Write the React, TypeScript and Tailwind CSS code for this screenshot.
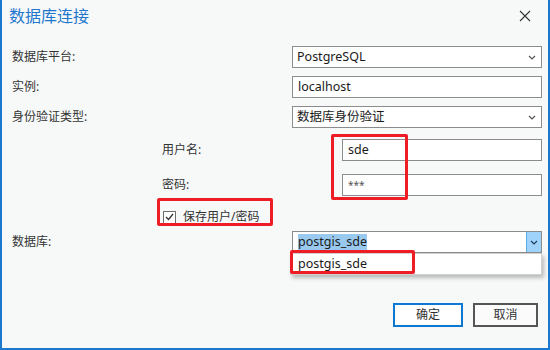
import React from "react";

const font = { fontFamily: '"Noto Sans", "Noto Sans CJK SC", sans-serif' };

const Chevron = ({ color = "#555" }: { color?: string }) => (
  <svg width="8" height="5" viewBox="0 0 8 5" fill="none">
    <path d="M1 1l3 3 3-3" stroke={color} strokeWidth="1.2" />
  </svg>
);

const Select = ({ value }: { value: string }) => (
  <div className="flex h-[22px] flex-1 items-center justify-between border border-[#8c8c8c] bg-white pl-[4px] pr-[5px] text-[12.5px] text-[#1a1a1a]">
    <span>{value}</span>
    <Chevron />
  </div>
);

const Input = ({ value, small }: { value: string; small?: boolean }) => (
  <div
    className={`flex h-[22px] flex-1 items-center border border-[#8c8c8c] bg-white px-[5px] ${
      small ? "text-[10px] text-[#555]" : "text-[12.5px] text-[#1a1a1a]"
    }`}
  >
    {value}
  </div>
);

export default function App() {
  return (
    <div
      className="relative flex h-[350px] w-[550px] flex-col border-x-2 border-b-2 border-[#1b78cc] bg-[#f7f9f9] text-[12px] text-[#333]"
      style={font}
    >
      {/* title bar */}
      <div className="flex h-[32px] items-center justify-between pl-[7px] pr-[17px]">
        <span className="text-[16px] text-[#1e77cc]">数据库连接</span>
        <svg width="12" height="12" viewBox="0 0 12 12">
          <path d="M1 1l10 10M11 1L1 11" stroke="#333" strokeWidth="1.1" />
        </svg>
      </div>

      <div className="flex flex-col pl-[10px] pr-[6px]">
        <div className="mt-[14px] flex items-center">
          <span className="w-[280px]">数据库平台:</span>
          <Select value="PostgreSQL" />
        </div>
        <div className="mt-[8px] flex items-center">
          <span className="w-[280px]">实例:</span>
          <Input value="localhost" />
        </div>
        <div className="mt-[8px] flex items-center">
          <span className="w-[280px]">身份验证类型:</span>
          <Select value="数据库身份验证" />
        </div>

        <div className="mt-[11px] flex items-center pl-[150px]">
          <span className="w-[180px]">用户名:</span>
          <Input value="sde" />
        </div>
        <div className="mt-[13px] flex items-center pl-[150px]">
          <span className="w-[180px]">密码:</span>
          <Input value="***" small />
        </div>

        <div className="mt-[12px] flex items-center gap-[7px] pl-[151px]">
          <div className="flex h-[13px] w-[13px] items-center justify-center border border-[#6d6d6d] bg-white">
            <svg width="9" height="8" viewBox="0 0 9 8">
              <path d="M1 4l2.5 2.5L8 1" stroke="#333" strokeWidth="1.3" fill="none" />
            </svg>
          </div>
          <span>保存用户/密码</span>
        </div>

        <div className="relative mt-[5px] flex items-center">
          <span className="w-[280px]">数据库:</span>
          <div className="flex h-[22px] flex-1 items-center justify-between border border-[#8c8c8c] bg-white pl-[5px] text-[12.5px] text-[#1a1a1a]">
            <span className="bg-[#99c9ef] leading-[16px]">postgis_sde</span>
            <div className="flex h-full w-[15px] items-center justify-center border-l border-[#5aaee8] bg-[#9fd3fb]">
              <Chevron color="#1f3b57" />
            </div>
          </div>
          {/* open dropdown */}
          <div className="absolute left-[278px] right-0 top-[22px] flex h-[22px] items-center border border-[#d0d0d0] bg-white pl-[7px] text-[12.5px] text-[#1a1a1a] shadow-[2px_3px_4px_rgba(0,0,0,0.25)]">
            postgis_sde
          </div>
        </div>

        <div className="mt-[50px] flex justify-end gap-[10px] pr-[4px]">
          <button className="h-[24px] w-[70px] border-2 border-[#0c78d4] bg-white text-[12px] text-[#333]">
            确定
          </button>
          <button className="h-[24px] w-[65px] border-2 border-[#555] bg-[#fbfbfb] text-[12px] text-[#333]">
            取消
          </button>
        </div>
      </div>

      {/* red annotation boxes */}
      <div className="pointer-events-none absolute left-[329px] top-[134px] h-[66px] w-[77px] rounded-[2px] border-[3px] border-[#ee1c25]" />
      <div className="pointer-events-none absolute left-[155px] top-[198px] h-[28px] w-[116px] rounded-[2px] border-[3px] border-[#ee1c25]" />
      <div className="pointer-events-none absolute left-[288px] top-[250px] h-[24px] w-[125px] rounded-[2px] border-[3px] border-[#ee1c25]" />
    </div>
  );
}
